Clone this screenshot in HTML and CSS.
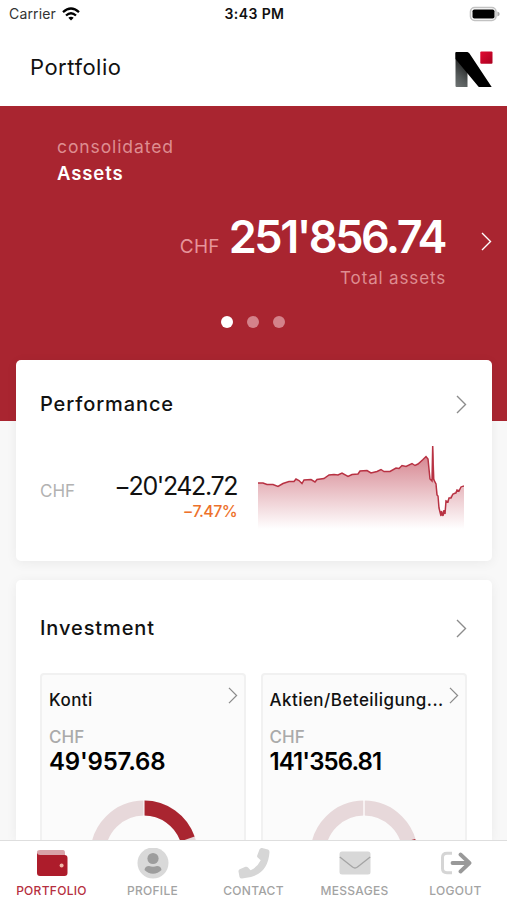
FILE: index.html
```html
<!DOCTYPE html>
<html lang="en">
<head>
    <meta charset="UTF-8">
    <meta name="viewport" content="width=device-width, initial-scale=1">
    <title>Portfolio</title>
    <link rel="stylesheet" href="styles.css">
</head>
<body>
    <div class="statusbar">
        <div class="carrier">
            <span>Carrier</span>
            <svg width="18" height="14" viewBox="0 0 18 14" fill="none" stroke="#000" stroke-width="2.3">
                <path d="M1 5.1Q9 -2 17 5.1M4 8.5Q9 4 14 8.5"/>
                <path d="M9 13.4L6.3 10.8Q9 8.7 11.7 10.8Z" fill="#000" stroke="none"/>
            </svg>
        </div>
        <span class="time">3:43 PM</span>
        <svg class="battery" width="31" height="16" viewBox="0 0 31 16">
            <rect x="1.500" y="1.500" width="25.500" height="13" rx="4.200" fill="#fff" stroke="#c2c2c2" stroke-width="1.600"/>
            <rect x="3.500" y="3.400" width="22" height="9.200" rx="1.800"/>
            <path d="M28.4 5.5Q30.7 6.2 30.7 8T28.4 10.5Z" fill="#aaa"/>
        </svg>
    </div>

    <header class="header">
        <h1>Portfolio</h1>
        <svg class="logo" width="38" height="37" viewBox="0 0 38 37">
            <defs>
                <linearGradient id="logoGrey" x1="0" y1="1" x2="0.3" y2="0">
                    <stop offset="0" stop-color="#6f7474"/>
                    <stop offset="0.35" stop-color="#555a5a"/>
                    <stop offset="1" stop-color="#111"/>
                </linearGradient>
                <linearGradient id="logoRed" x1="0" y1="0" x2="1" y2="1">
                    <stop offset="0" stop-color="#e20a32"/>
                    <stop offset="1" stop-color="#a9001f"/>
                </linearGradient>
            </defs>
            <path d="M1.500 1H12.500V36H1.500Q.5 36 .5 35V2Q.5 1 1.500 1Z" fill="url(#logoGrey)"/>
            <path d="M1.500 1H12Q13.500 1 14.500 2.500L36.700 36H24.500Q23.500 36 22.500 34.500L.5 8V2Q.5 1 1.500 1Z"/>
            <rect x="25.3" y="0.5" width="12.2" height="12.2" rx="1" fill="url(#logoRed)"/>
        </svg>
    </header>

    <section class="hero">
        <p class="hero-sub">consolidated</p>
        <p class="hero-title">Assets</p>
        <div class="hero-row">
            <span class="hero-currency">CHF</span>
            <span class="hero-amount">251'856.74</span>
            <svg class="hero-arrow" width="11" height="19" viewBox="0 0 11 19"><path d="M1 1L9.5 9.5L1 18"/></svg>
        </div>
        <p class="hero-label">Total assets</p>
        <div class="dots">
            <i class="dot active"></i>
            <i class="dot"></i>
            <i class="dot"></i>
        </div>
    </section>

    <main class="content">
        <section class="card performance">
            <div class="card-head">
                <h2>Performance</h2>
                <svg class="arrow" width="11" height="19" viewBox="0 0 11 19"><path d="M1 1L9.5 9.5L1 18"/></svg>
            </div>
            <div class="perf-row">
                <span class="perf-currency">CHF</span>
                <div class="perf-values">
                    <span class="perf-amount">−20'242.72</span>
                    <span class="perf-percent">−7.47%</span>
                </div>
                <svg class="chart" width="206" height="86" viewBox="0 0 206 86">
                    <defs>
                        <linearGradient id="chartFill" x1="0" y1="10" x2="0" y2="84" gradientUnits="userSpaceOnUse">
                            <stop offset="0" stop-color="#b52538" stop-opacity="0.56"/>
                            <stop offset="1" stop-color="#b52538" stop-opacity="0"/>
                        </linearGradient>
                    </defs>
                    <path fill="url(#chartFill)" d="M0 38L5 38L9 39.5L15 39.5L20 41.5L25 38.5L31 36.5L36 36.5L38 34L41 35.5L44 38.5L46 35L53 34.5L57 37L59 34.5L66 33.5L71 30L76 29.5L80 30L84 28L90 31.5L94 29.5L100 29L102 26L109 25.5L113 28L119 26.5L123 24.5L126 26.5L132 26.5L138 23L141 23.5L144 20.5L148 21.5L154 18.5L157 20.5L160 19L165 14.5L168 11.500L170 14L172 34L174 36L175 1L177 38L179 44L180 57L182 66L184 70L187 65L188 57L193 50L198 46L201 44L206 42V84H0Z"/>
                    <path class="chart-line" d="M0 38L5 38L9 39.5L15 39.5L20 41.5L25 38.5L31 36.5L36 36.5L38 34L41 35.5L44 38.5L46 35L53 34.5L57 37L59 34.5L66 33.5L71 30L76 29.5L80 30L84 28L90 31.5L94 29.5L100 29L102 26L109 25.5L113 28L119 26.5L123 24.5L126 26.5L132 26.5L138 23L141 23.5L144 20.5L148 21.5L154 18.5L157 20.5L160 19L165 14.5L168 11.500L170 14L172 34L174 36L174.7 1L175.5 34L178 39L179 50L180 51L181 63L183 71L183.5 66L185 71L186 65L187 69L188 56L190 57L191 53L193 53L195 49L198 48L199 45L201 46L203 42L206 41"/>
                </svg>
            </div>
        </section>

        <section class="card investment">
            <div class="card-head">
                <h2>Investment</h2>
                <svg class="arrow" width="11" height="19" viewBox="0 0 11 19"><path d="M1 1L9.5 9.5L1 18"/></svg>
            </div>
            <div class="tiles">
                <div class="tile">
                    <div class="tile-head">
                        <h3>Konti</h3>
                        <svg class="arrow" width="10" height="17" viewBox="0 0 11 19"><path d="M1 1L9.5 9.5L1 18"/></svg>
                    </div>
                    <p class="tile-currency">CHF</p>
                    <p class="tile-amount">49'957.68</p>
                    <svg class="donut" width="108" height="108" viewBox="0 0 108 108">
                        <circle cx="54" cy="54" r="46" fill="none" stroke="#e7d8da" stroke-width="15"/>
                        <path d="M54 8A46 46 0 0 1 97.500 39" fill="none" stroke="#a92530" stroke-width="15"/>
                        <path d="M54 0V16" stroke="#fff" stroke-width="1"/>
                    </svg>
                </div>
                <div class="tile">
                    <div class="tile-head">
                        <h3>Aktien/Beteiligung...</h3>
                        <svg class="arrow" width="10" height="17" viewBox="0 0 11 19"><path d="M1 1L9.5 9.5L1 18"/></svg>
                    </div>
                    <p class="tile-currency">CHF</p>
                    <p class="tile-amount tight">141'356.81</p>
                    <svg class="donut" width="108" height="108" viewBox="0 0 108 108">
                        <circle cx="54" cy="54" r="46" fill="none" stroke="#e7d8da" stroke-width="15"/>
                        <path d="M98 41A46 46 0 0 1 54 100" fill="none" stroke="#a92530" stroke-width="15"/>
                        <path d="M54 0V16" stroke="#fff" stroke-width="1.3"/>
                    </svg>
                </div>
            </div>
        </section>
    </main>

    <nav class="tabbar">
        <a class="tab active">
            <svg width="32" height="32" viewBox="0 0 32 32">
                <path d="M1 7V4Q1 2 4 2H27Q29 2 29 5V7Z" fill="#d9a2a8"/>
                <path d="M1 5Q1.500 7 4 7H28.500Q31.500 7 31.500 10V25Q31.500 28 28.500 28H4Q1 28 1 25Z" fill="#ad1c2b"/>
                <circle cx="25.600" cy="17.500" r="2" fill="#f0b9a8"/>
            </svg>
            <span>PORTFOLIO</span>
        </a>
        <a class="tab">
            <svg width="32" height="32" viewBox="0 0 32 32">
                <circle cx="16" cy="15" r="15.500" fill="#d9d9d9"/>
                <circle cx="16" cy="10.500" r="5.600" fill="#9d9d9d"/>
                <path d="M7.500 22Q8 18 12 18Q16 19.500 20 18Q24 18 24.500 22Q21 25.700 16 25.700T7.500 22Z" fill="#9d9d9d"/>
            </svg>
            <span>PROFILE</span>
        </a>
        <a class="tab">
            <svg width="32" height="32" viewBox="0 0 32 32">
                <path d="M24 0L30 1.400Q31.500 2 31.500 4Q30 29 4 30.500Q2 30.500 1.500 29L.5 23.500Q.3 22 1.700 21.300L7.500 18.800Q9 18.300 10 19.400L12.600 22.300Q19.500 19 22.700 12.300L19.700 9.500Q18.700 8.500 19.300 7.200L21.600 1.300Q22.500 -.2 24 0Z" fill="#d6d6d6"/>
            </svg>
            <span>CONTACT</span>
        </a>
        <a class="tab">
            <svg width="32" height="32" viewBox="0 0 32 32">
                <rect x=".5" y="3.500" width="31" height="23" rx="2.500" fill="#d8d8d8"/>
                <path d="M.8 9L13.500 19Q16 21 18.500 19L31.200 9" fill="none" stroke="#a4a4a4" stroke-width="1.300"/>
            </svg>
            <span>MESSAGES</span>
        </a>
        <a class="tab">
            <svg width="32" height="32" viewBox="0 0 32 32">
                <path d="M12 5.300H7Q2.500 5.300 2.500 9.500V20.500Q2.500 24.700 7 24.700H12" fill="none" stroke="#d5d5d5" stroke-width="3"/>
                <path d="M12.500 15H29M20.500 6.500L29.500 15L20.500 23.500" fill="none" stroke="#999" stroke-width="3.800" stroke-linecap="round" stroke-linejoin="round"/>
            </svg>
            <span>LOGOUT</span>
        </a>
    </nav>
</body>
</html>
```
FILE: styles.css
```css
* {
    box-sizing: border-box;
}

body {
    margin: 0;
    height: 900px;
    display: flex;
    flex-direction: column;
    overflow: hidden;
    font-family: Inter, "Liberation Sans", sans-serif;
    color: #111;
    background-color: #f8f8f8;
}

h1, h2, h3, p {
    margin: 0;
    font-weight: 500;
}

svg {
    display: block;
    flex: none;
}

.statusbar {
    flex: none;
    height: 27px;
    padding: 0 7px 0 9px;
    display: grid;
    grid-template-columns: 1fr auto 1fr;
    align-items: center;
    background: #fff;
    font-size: 14px;
}

.carrier {
    display: flex;
    align-items: center;
    gap: 6px;
    color: #333;
    letter-spacing: 0.15px;
}

.time {
    font-weight: 600;
    letter-spacing: 0.4px;
}

.battery {
    justify-self: end;
}

.header {
    flex: none;
    height: 79px;
    padding: 0 14px 0 30px;
    display: flex;
    align-items: center;
    justify-content: space-between;
    background: #fff;
}

.header h1 {
    font-size: 22px;
    font-weight: 400;
    line-height: 30px;
    letter-spacing: 0.5px;
}

.logo {
    margin-top: 5px;
}

/* red header area */
.hero {
    flex: none;
    height: 315px;
    padding: 28px 15px 0 57px;
    background: #a92530;
    color: #fff;
}

.hero-sub {
    font-size: 17.5px;
    line-height: 26px;
    font-weight: 400;
    letter-spacing: 0.9px;
    color: #de8d91;
}

.hero-title {
    font-size: 18.5px;
    font-weight: 600;
    line-height: 26px;
    letter-spacing: 0.9px;
}

.hero-row {
    display: flex;
    align-items: baseline;
    justify-content: flex-end;
    height: 60px;
    margin-top: 20px;
}

.hero-currency {
    font-size: 19px;
    color: #e6959a;
    letter-spacing: 0.3px;
    margin-right: 9px;
}

.hero-amount {
    font-size: 45px;
    font-weight: 600;
    line-height: 62px;
    letter-spacing: -2.5px;
}

.hero-arrow {
    align-self: center;
    margin: 11px 0 0 36px;
}

.hero-arrow path,
.arrow path {
    fill: none;
    stroke: #fff;
    stroke-width: 1.4;
}

.hero-label {
    padding-right: 46px;
    font-size: 17px;
    line-height: 24px;
    font-weight: 400;
    text-align: right;
    letter-spacing: 0.85px;
    color: #de8d91;
}

.dots {
    display: flex;
    gap: 14px;
    margin: 26px 0 0 163.5px;
}

.dot {
    width: 12px;
    height: 12px;
    border-radius: 50%;
    background: #d4828a;
}

.dot.active {
    background: #fff;
}

.content {
    flex: 1;
    min-height: 0;
    margin-top: -61px;
    padding: 0 15px 0 16px;
}

.card {
    padding: 0 25px 0 24px;
    background: #fff;
    border-radius: 5px;
    box-shadow: 0 2px 12px rgba(0, 0, 0, 0.06);
}

.performance {
    height: 201px;
    margin-bottom: 19px;
}

.investment {
    height: 260px;
    overflow: hidden;
    border-radius: 5px 5px 0 0;
}

.card-head {
    display: flex;
    align-items: center;
    justify-content: space-between;
    padding-top: 31px;
}

.investment .card-head {
    padding-top: 35px;
}

.card-head h2 {
    font-size: 20px;
    line-height: 27px;
    font-weight: 500;
    letter-spacing: 0.9px;
}

.arrow path {
    stroke: #8c8c8c;
}

.perf-row {
    display: flex;
    padding-top: 27px;
}

.perf-currency {
    width: 50px;
    padding-top: 35px;
    font-size: 17px;
    line-height: 22px;
    color: #b2b2b2;
}

.perf-values {
    width: 147px;
    padding-top: 25px;
    display: flex;
    flex-direction: column;
    align-items: flex-end;
}

.perf-amount {
    font-size: 25px;
    line-height: 32px;
    letter-spacing: -1.4px;
}

.perf-percent {
    font-size: 16px;
    line-height: 18px;
    font-weight: 500;
    letter-spacing: -0.6px;
    color: #ed712b;
}

.chart {
    margin-left: 21px;
}

.chart-line {
    fill: none;
    stroke: #b83243;
    stroke-width: 1.5;
}

.tiles {
    display: grid;
    grid-template-columns: 206px 206px;
    gap: 14.5px;
    padding-top: 31px;
}

.tile {
    height: 300px;
    padding: 12px 6px 0 7px;
    border: 2px solid #f1f1f1;
    border-radius: 4px;
    background: #fbfbfb;
}

.tile-head {
    display: flex;
    justify-content: space-between;
    white-space: nowrap;
}

.tile-head h3 {
    font-size: 17px;
    line-height: 26px;
    letter-spacing: 0.45px;
}

.tile-currency {
    margin-top: 12px;
    font-size: 17px;
    line-height: 24px;
    color: #aaa;
}

.tile-amount {
    font-size: 24px;
    line-height: 25px;
    font-weight: 600;
    letter-spacing: -0.2px;
    color: #000;
}

.tile-amount.tight {
    letter-spacing: -0.9px;
}

.donut {
    margin: 26px auto 0;
}

/* bottom navigation */
.tabbar {
    flex: none;
    height: 60px;
    padding: 7px 0 0 1px;
    display: grid;
    grid-template-columns: repeat(5, 101px);
    border-top: 1px solid #dedede;
    background: #fff;
}

.tab {
    display: flex;
    flex-direction: column;
    align-items: center;
    font-size: 12px;
    font-weight: 500;
    line-height: 20px;
    letter-spacing: 0.3px;
    color: #a3a3a3;
}

.tab span {
    padding-top: 1px;
}

.tab.active {
    color: #b62f40;
}
```
